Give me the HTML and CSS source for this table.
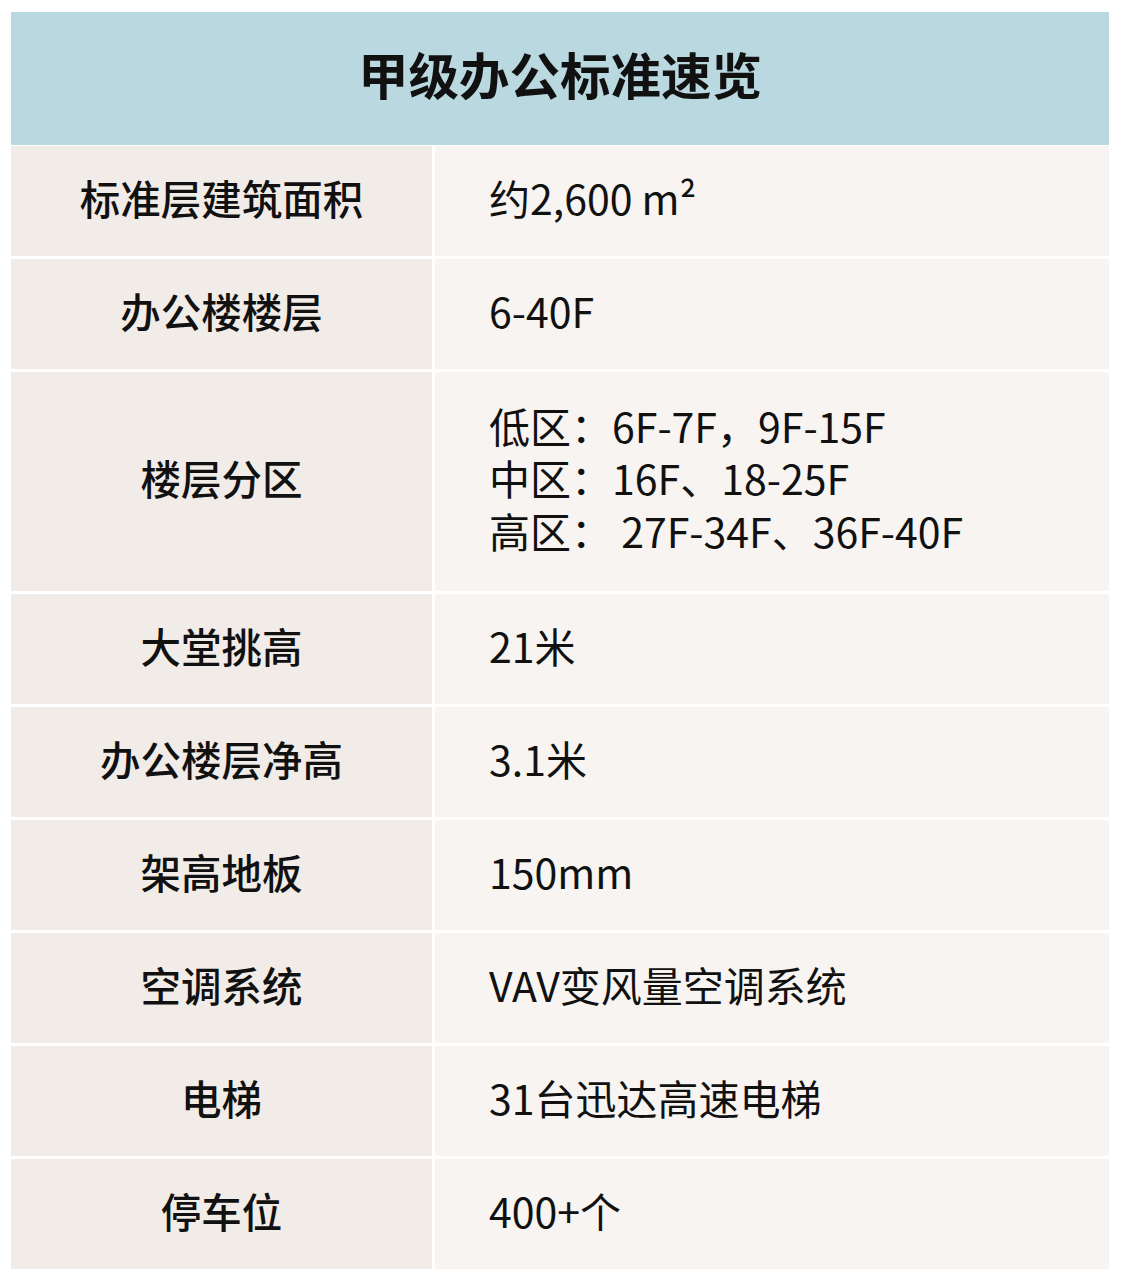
FILE: index.html
```html
<!DOCTYPE html>
<html lang="zh-CN">
<head>
<meta charset="utf-8">
<title>甲级办公标准速览</title>
<link rel="stylesheet" href="styles.css">
</head>
<body>
<div class="sheet">
  <div class="title">甲级办公标准速览</div>
  <div class="label">标准层建筑面积</div>
  <div class="value">约2,600 m²</div>
  <div class="label">办公楼楼层</div>
  <div class="value">6-40F</div>
  <div class="label tall">楼层分区</div>
  <div class="value tall multi">
    <div class="line">低区：6F-7F，9F-15F</div>
    <div class="line">中区：16F、18-25F</div>
    <div class="line">高区： 27F-34F、36F-40F</div>
  </div>
  <div class="label">大堂挑高</div>
  <div class="value">21米</div>
  <div class="label">办公楼层净高</div>
  <div class="value">3.1米</div>
  <div class="label">架高地板</div>
  <div class="value">150mm</div>
  <div class="label">空调系统</div>
  <div class="value">VAV变风量空调系统</div>
  <div class="label">电梯</div>
  <div class="value">31台迅达高速电梯</div>
  <div class="label">停车位</div>
  <div class="value">400+个</div>
</div>
</body>
</html>
```
FILE: styles.css
```css
html, body {
  margin: 0;
  padding: 0;
  background: #ffffff;
}
body {
  font-family: "Noto Sans CJK SC", "Noto Sans", sans-serif;
  color: #111111;
}
.sheet {
  margin: 12px 0 0 11px;
  width: 1098px;
  display: grid;
  grid-template-columns: 421px 674px;
  grid-template-rows: 131px 110px 110px 219px 110px 110px 110px 110px 110px 110px;
  column-gap: 3px;
  row-gap: 3px;
}
.title {
  grid-column: 1 / 3;
  background: #bad8e0;
  display: flex;
  align-items: center;
  justify-content: center;
  font-size: 50.5px;
  font-weight: 700;
  margin-bottom: -2px;
  padding-bottom: 12px;
}
.label {
  background: #f1ece8;
  display: flex;
  align-items: center;
  justify-content: center;
  font-size: 40.5px;
  font-weight: 500;
  padding-bottom: 8px;
}
.value {
  background: #f7f4f1;
  display: flex;
  align-items: center;
  padding-left: 54px;
  padding-bottom: 8px;
  font-size: 41px;
  font-weight: 400;
}
.multi {
  flex-direction: column;
  align-items: flex-start;
  justify-content: center;
}
.line {
  line-height: 52.5px;
  height: 52.5px;
}
```
